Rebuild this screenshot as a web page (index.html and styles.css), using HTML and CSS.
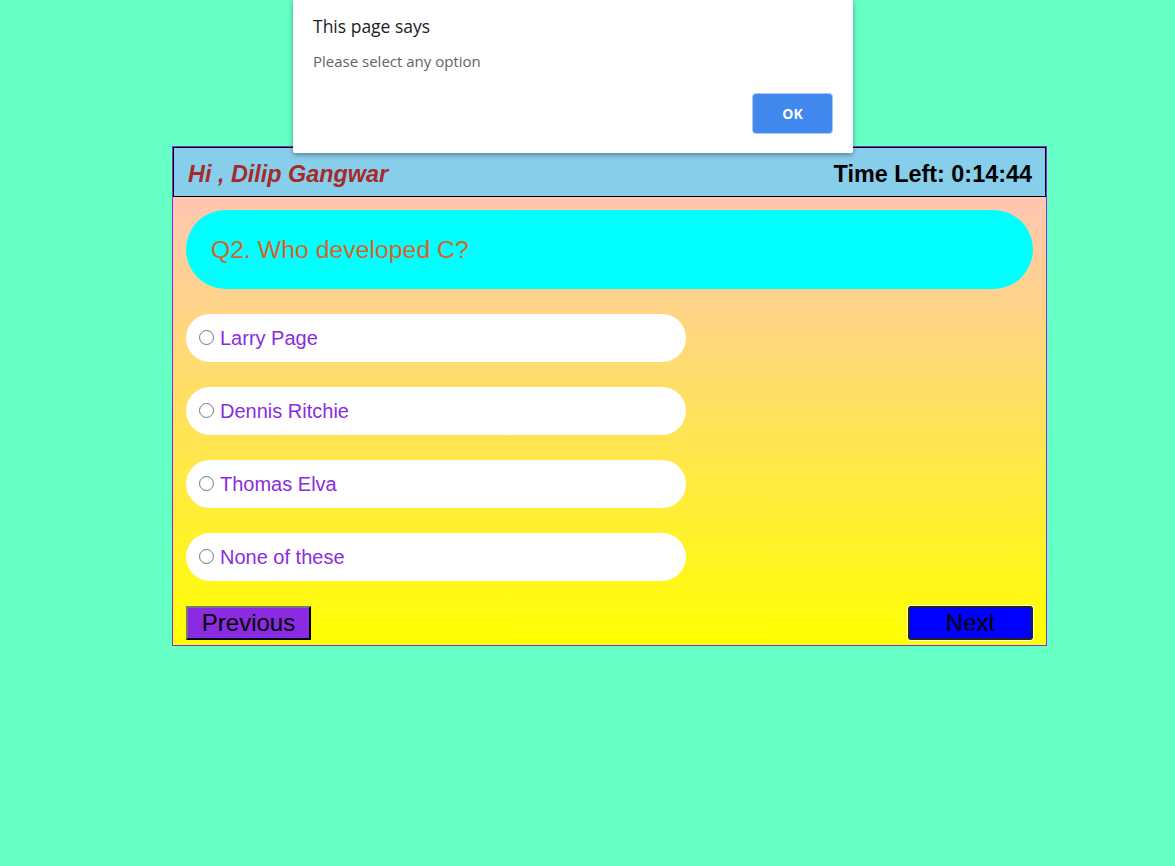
FILE: index.html
```html
<!DOCTYPE html>
<html>
<head>
<meta charset="utf-8">
<link rel="stylesheet" href="styles.css">
</head>
<body>
<div class="quiz">
  <div class="quiz-header">
    <span class="greet">Hi , Dilip Gangwar</span>
    <span class="timer">Time Left: 0:14:44</span>
  </div>
  <div class="quiz-body">
    <div class="question">Q2. Who developed C?</div>
    <label class="option"><span class="radio"></span>Larry Page</label>
    <label class="option"><span class="radio"></span>Dennis Ritchie</label>
    <label class="option"><span class="radio"></span>Thomas Elva</label>
    <label class="option"><span class="radio"></span>None of these</label>
    <div class="nav">
      <button class="btn prev">Previous</button>
      <button class="btn next">Next</button>
    </div>
  </div>
</div>
<div class="dialog">
  <div class="dialog-title">This page says</div>
  <div class="dialog-msg">Please select any option</div>
  <div class="dialog-actions"><button class="ok">OK</button></div>
</div>
</body>
</html>
```
FILE: styles.css
```css
html, body {
  margin: 0;
  padding: 0;
}
body {
  background: #66ffc6;
  width: 1175px;
  height: 866px;
  overflow: hidden;
  font-family: "Liberation Sans", Arial, sans-serif;
  position: relative;
}
.quiz {
  margin: 146px 0 0 172px;
  width: 873px;
  border: 1px solid #8a2be2;
}
.quiz-header {
  height: 48px;
  border: 1px solid #000;
  background: #87ceeb;
  display: flex;
  align-items: center;
  justify-content: space-between;
  padding: 4px 13px 0 14px;
  box-sizing: content-box;
  height: 44px;
  font-size: 23.4px;
  font-weight: bold;
}
.greet {
  color: #a52a2a;
  font-style: italic;
}
.timer {
  color: #000;
}
.quiz-body {
  background: linear-gradient(to bottom, #ffc6b4, #ffff00);
  padding: 13px 13px 5px 13px;
}
.question {
  height: 79px;
  background: #00ffff;
  border-radius: 40px;
  display: flex;
  align-items: center;
  padding-left: 25px;
  font-size: 24.8px;
  color: #d7652a;
  margin-bottom: 25px;
}
.option {
  width: 500px;
  height: 48px;
  background: #fff;
  border-radius: 24px;
  display: flex;
  align-items: center;
  box-sizing: border-box;
  padding-left: 13px;
  font-size: 20px;
  color: #8a2be2;
  margin-bottom: 25px;
}
.radio {
  width: 13px;
  height: 13px;
  border: 1px solid #767676;
  border-radius: 50%;
  background: #fff;
  margin-right: 6px;
  margin-top: -2px;
}
.nav {
  display: flex;
  justify-content: space-between;
}
.btn {
  width: 125px;
  height: 34px;
  font-family: "Liberation Sans", Arial, sans-serif;
  font-size: 24px;
  color: #000;
  padding: 0;
  line-height: 28px;
}
.prev {
  background: #8a2be2;
  border: 2px outset #767676;
  border-color: #777 #222 #222 #777;
}
.next {
  background: #0000ff;
  border: 2px solid #222;
  border-radius: 3px;
  box-shadow: 0 0 0 1px #fff;
}
.dialog {
  position: absolute;
  left: 293px;
  top: 0;
  width: 560px;
  height: 153px;
  background: #fff;
  box-sizing: border-box;
  padding: 14px 20px 20px 20px;
  box-shadow: 0 2px 5px rgba(0,0,0,0.35);
  border-radius: 0 0 2px 2px;
  font-family: "Open Sans", "Noto Sans", sans-serif;
}
.dialog-title {
  font-size: 17.5px;
  color: #202124;
  line-height: 24px;
}
.dialog-msg {
  font-size: 15px;
  color: #5f6368;
  margin-top: 12px;
  line-height: 22px;
}
.dialog-actions {
  display: flex;
  justify-content: flex-end;
  margin-top: 21px;
}
.ok {
  width: 81px;
  height: 41px;
  background: #4088ee;
  color: #fff;
  border: 1px solid #a8c8f5;
  border-radius: 4px;
  font-family: "Open Sans", "Noto Sans", sans-serif;
  font-weight: bold;
  font-size: 14px;
}
```
